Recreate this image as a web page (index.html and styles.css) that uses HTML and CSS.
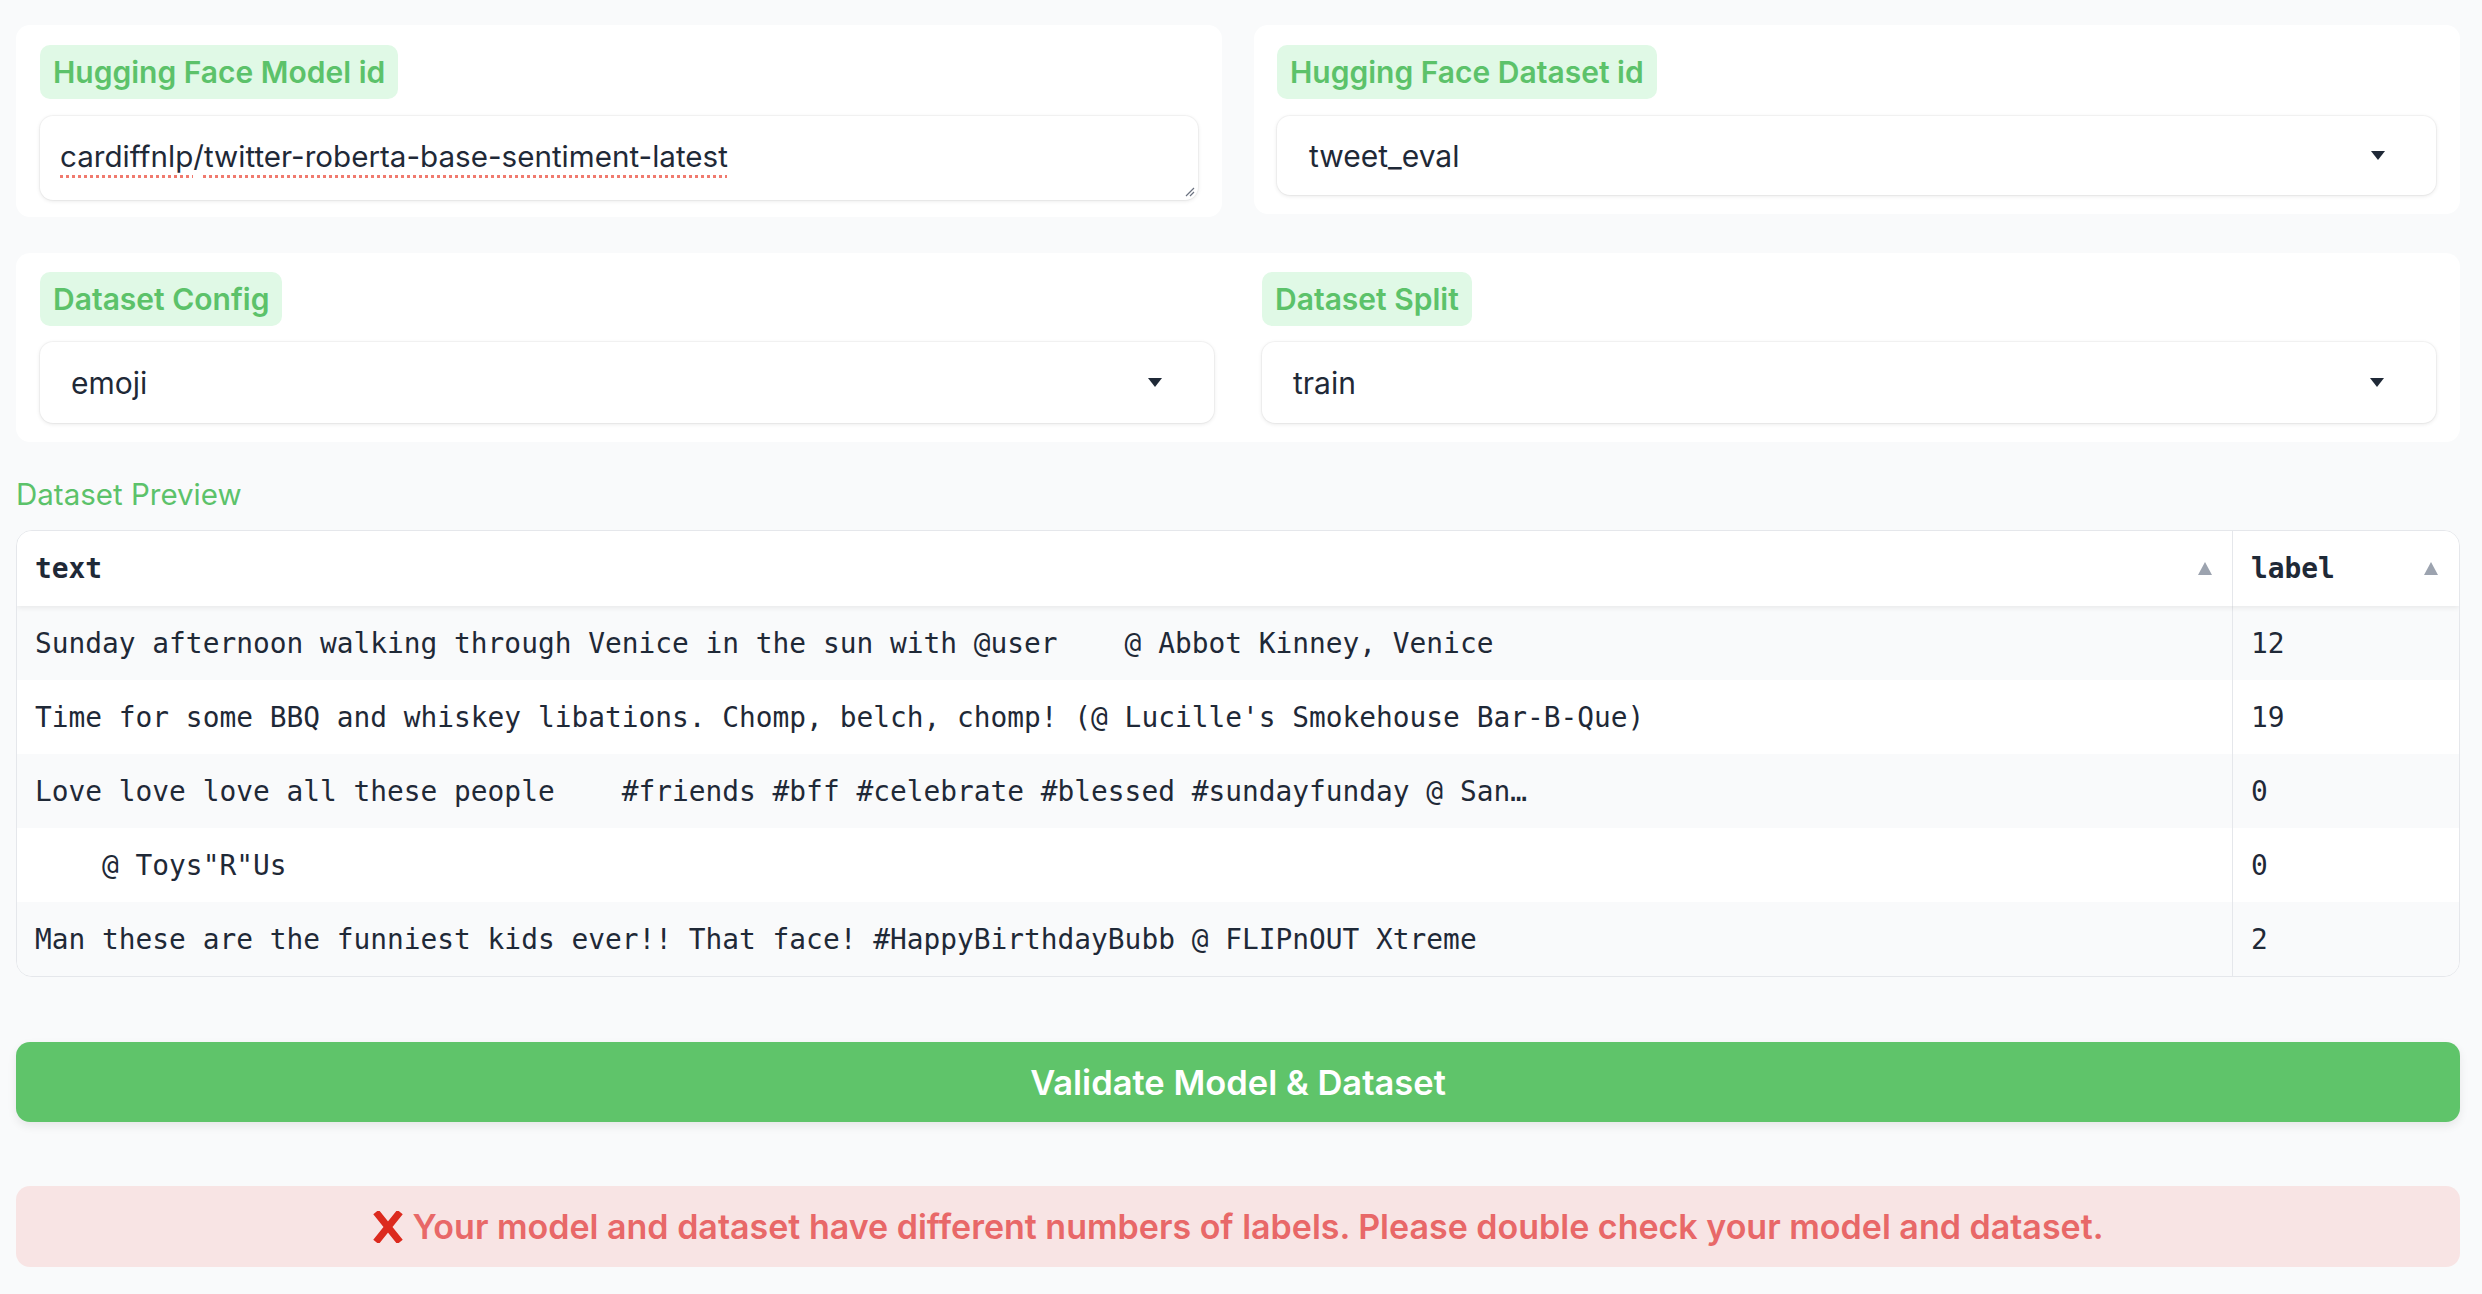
FILE: index.html
```html
<!DOCTYPE html>
<html>
<head>
<meta charset="utf-8">
<link rel="stylesheet" href="styles.css">
</head>
<body>
<div class="page">
  <div class="row-top">
    <div class="card card-model">
      <div class="pill">Hugging Face Model id</div>
      <div class="textbox">
        <span class="spell">cardiffnlp</span>/<span class="spell">twitter-roberta-base-sentiment-latest</span>
        <svg class="resize" width="10" height="10" viewBox="0 0 10 10"><path d="M9 1 L1 9 M9 5 L5 9" stroke="#6b7280" stroke-width="1.2" fill="none"/></svg>
      </div>
    </div>
    <div class="card card-dataset">
      <div class="pill">Hugging Face Dataset id</div>
      <div class="dropdown">
        <span>tweet_eval</span>
        <svg class="caret" width="14" height="9" viewBox="0 0 14 9"><polygon points="0,0 14,0 7,9" fill="#1f2937"/></svg>
      </div>
    </div>
  </div>

  <div class="card card-wide">
    <div class="col">
      <div class="pill">Dataset Config</div>
      <div class="dropdown dd2">
        <span>emoji</span>
        <svg class="caret" width="14" height="9" viewBox="0 0 14 9"><polygon points="0,0 14,0 7,9" fill="#1f2937"/></svg>
      </div>
    </div>
    <div class="col">
      <div class="pill">Dataset Split</div>
      <div class="dropdown dd2">
        <span>train</span>
        <svg class="caret" width="14" height="9" viewBox="0 0 14 9"><polygon points="0,0 14,0 7,9" fill="#1f2937"/></svg>
      </div>
    </div>
  </div>

  <div class="preview-label">Dataset Preview</div>

  <div class="table">
    <div class="trow thead">
      <div class="cell c-text"><span>text</span><svg class="sort" width="14" height="13" viewBox="0 0 14 13"><polygon points="7,0 14,13 0,13" fill="#9ca3af"/></svg></div>
      <div class="cell c-label"><span>label</span><svg class="sort" width="14" height="13" viewBox="0 0 14 13"><polygon points="7,0 14,13 0,13" fill="#9ca3af"/></svg></div>
    </div>
    <div class="trow odd">
      <div class="cell c-text">Sunday afternoon walking through Venice in the sun with @user    @ Abbot Kinney, Venice</div>
      <div class="cell c-label">12</div>
    </div>
    <div class="trow">
      <div class="cell c-text">Time for some BBQ and whiskey libations. Chomp, belch, chomp! (@ Lucille's Smokehouse Bar-B-Que)</div>
      <div class="cell c-label">19</div>
    </div>
    <div class="trow odd">
      <div class="cell c-text">Love love love all these people    #friends #bff #celebrate #blessed #sundayfunday @ San…</div>
      <div class="cell c-label">0</div>
    </div>
    <div class="trow">
      <div class="cell c-text">    @ Toys"R"Us</div>
      <div class="cell c-label">0</div>
    </div>
    <div class="trow odd last">
      <div class="cell c-text">Man these are the funniest kids ever!! That face! #HappyBirthdayBubb @ FLIPnOUT Xtreme</div>
      <div class="cell c-label">2</div>
    </div>
  </div>

  <button class="validate">Validate Model &amp; Dataset</button>

  <div class="error">
    <svg class="xmark" width="32" height="32" viewBox="0 0 32 32"><path d="M4 1 L28 31 M28 1 L4 31" stroke="#dc2a1e" stroke-width="7" fill="none"/></svg>
    <span>Your model and dataset have different numbers of labels. Please double check your model and dataset.</span>
  </div>
</div>
</body>
</html>
```

FILE: styles.css
```css
* { box-sizing: border-box; }
html, body { margin: 0; padding: 0; }
body {
  background: #f9fafb;
  font-family: Inter, "Noto Sans", sans-serif;
  color: #1f2937;
}
.page {
  padding: 25px 22px 20px 16px;
  display: flex;
  flex-direction: column;
}
.row-top {
  display: grid;
  grid-template-columns: 1fr 1fr;
  gap: 32px;
  align-items: start;
}
.card {
  background: #ffffff;
  border-radius: 14px;
}
.card-model {
  padding: 20px 24px 17px 24px;
  display: flex;
  flex-direction: column;
  align-items: flex-start;
  gap: 17px;
}
.card-dataset {
  padding: 20px 24px 19px 23px;
  display: flex;
  flex-direction: column;
  align-items: flex-start;
  gap: 17px;
}
.pill {
  background: #e0f9e6;
  color: #5cc26a;
  font-weight: 600;
  font-size: 30px;
  height: 54px;
  line-height: 54px;
  padding: 0 13px;
  border-radius: 10px;
  white-space: nowrap;
}
.textbox {
  position: relative;
  width: 100%;
  height: 84px;
  background: #fff;
  border-radius: 13px;
  box-shadow: 0 1px 4px rgba(0, 0, 0, 0.10), 0 0 0 1px rgba(0, 0, 0, 0.03);
  display: flex;
  align-items: center;
  padding: 0 20px 5px 20px;
  font-size: 29.6px;
  white-space: nowrap;
}
.spell {
  text-decoration: underline dotted #f07a6e;
  text-decoration-thickness: 3px;
  text-underline-offset: 8px;
}
.resize {
  position: absolute;
  right: 3px;
  bottom: 3px;
}
.dropdown {
  width: 100%;
  height: 79px;
  background: #fff;
  border-radius: 13px;
  box-shadow: 0 1px 4px rgba(0, 0, 0, 0.10), 0 0 0 1px rgba(0, 0, 0, 0.03);
  display: flex;
  align-items: center;
  justify-content: space-between;
  padding: 0 51px 0 32px;
  font-size: 30px;
}
.dd2 { height: 81px; padding: 0 52px 0 31px; }
.card-wide {
  margin-top: 36px;
  padding: 19px 24px 19px 24px;
  display: grid;
  grid-template-columns: 1fr 1fr;
  gap: 48px;
}
.col {
  display: flex;
  flex-direction: column;
  align-items: flex-start;
  gap: 16px;
}
.preview-label {
  color: #5cc26a;
  font-size: 29.5px;
  line-height: 36px;
  margin-top: 34px;
  margin-bottom: 18px;
}
.table {
  border: 1px solid #e5e7eb;
  border-radius: 16px;
  overflow: hidden;
  background: #fff;
  font-family: "DejaVu Sans Mono", "Liberation Mono", monospace;
  font-size: 27.85px;
  color: #1f2937;
}
.trow {
  display: grid;
  grid-template-columns: 2215px 1fr;
  height: 74px;
  background: #fff;
}
.trow.odd { background: #f9fafb; }
.thead {
  height: 75px;
  font-weight: bold;
  position: relative;
  z-index: 1;
  box-shadow: 0 2px 5px rgba(0, 0, 0, 0.07);
}
.cell {
  display: flex;
  align-items: center;
  padding: 0 18px;
  white-space: pre;
  overflow: hidden;
}
.c-label { border-left: 1px solid #e5e7eb; }
.thead .cell { justify-content: space-between; }
.thead .c-text { padding-right: 20px; }
.thead .c-label { padding-right: 21px; }
.validate {
  margin-top: 65px;
  height: 80px;
  width: 100%;
  border: none;
  border-radius: 14px;
  background: #5fc46a;
  color: #ffffff;
  font-family: Inter, "Noto Sans", sans-serif;
  font-weight: 600;
  font-size: 34.5px;
  box-shadow: 0 4px 10px rgba(0, 0, 0, 0.08);
}
.error {
  margin-top: 64px;
  height: 81px;
  border-radius: 14px;
  background: #f8e4e4;
  color: #e86868;
  font-weight: 600;
  font-size: 34px;
  display: flex;
  align-items: center;
  justify-content: center;
  gap: 8px;
  white-space: nowrap;
}
.xmark { flex: none; }
```
